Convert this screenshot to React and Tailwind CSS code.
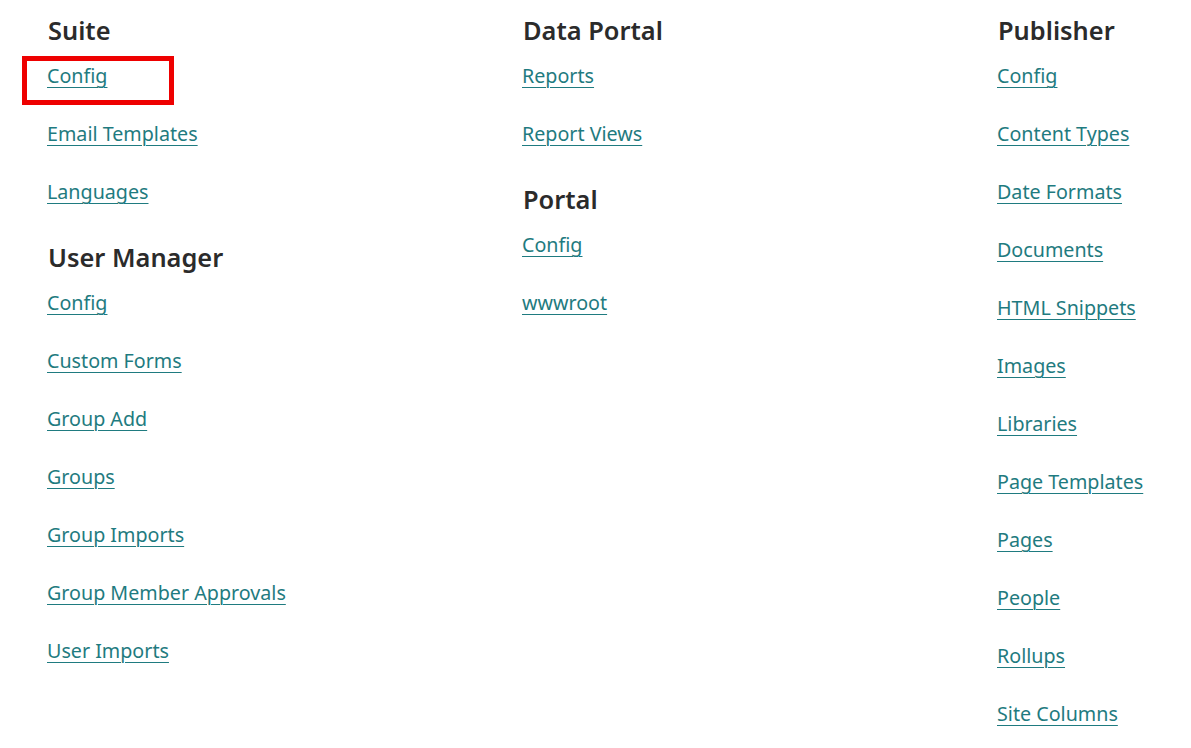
import React from "react";

const font = { fontFamily: '"Noto Sans", "Open Sans", sans-serif' };

function Section({ title, links, first }) {
  return (
    <div className={first ? "" : "mt-[19px]"}>
      <h2 className="text-[25.4px] leading-[34px] font-semibold text-[#2b2b2b]">{title}</h2>
      <ul>
        {links.map((l) => (
          <li key={l} className="h-[58px] flex items-center">
            <a href="#" className="-ml-[1px] text-[19.7px] leading-[28px] text-[#1f7b80] underline underline-offset-[4px] decoration-1">
              {l}
            </a>
          </li>
        ))}
      </ul>
    </div>
  );
}

export default function App() {
  return (
    <div className="relative w-[1191px] h-[748px] bg-white overflow-hidden" style={font}>
      <div className="grid grid-cols-[475px_475px_1fr] pl-[48px] pt-[13px]">
        <div>
          <Section first title="Suite" links={["Config", "Email Templates", "Languages"]} />
          <Section
            title="User Manager"
            links={["Config", "Custom Forms", "Group Add", "Groups", "Group Imports", "Group Member Approvals", "User Imports"]}
          />
        </div>
        <div>
          <Section first title="Data Portal" links={["Reports", "Report Views"]} />
          <Section title="Portal" links={["Config", "wwwroot"]} />
        </div>
        <div>
          <Section
            first
            title="Publisher"
            links={["Config", "Content Types", "Date Formats", "Documents", "HTML Snippets", "Images", "Libraries", "Page Templates", "Pages", "People", "Rollups", "Site Columns"]}
          />
        </div>
      </div>
      <div className="absolute left-[22px] top-[56px] w-[152px] h-[49px] border-[5px] border-[#ee0000]" />
    </div>
  );
}
